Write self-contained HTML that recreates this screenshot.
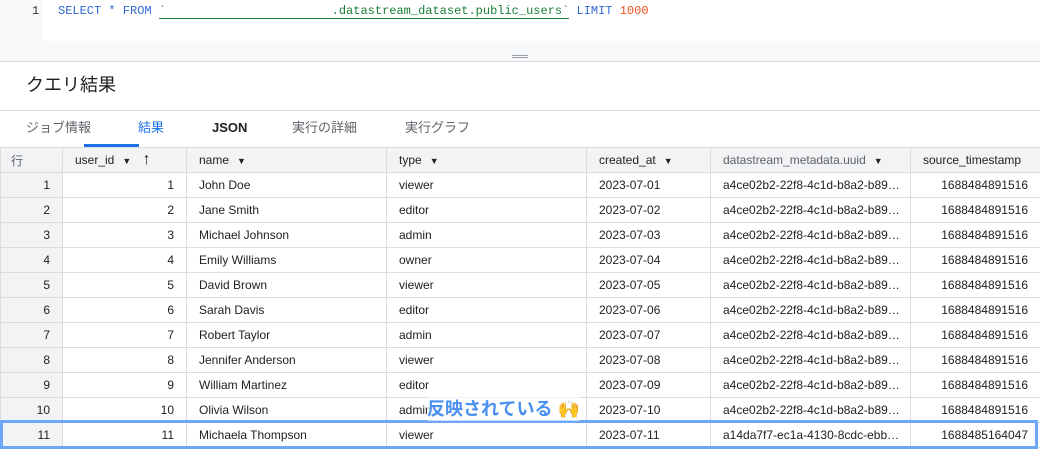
<!DOCTYPE html>
<html><head><meta charset="utf-8"><style>
*{margin:0;padding:0;box-sizing:border-box}
body{width:1040px;height:465px;overflow:hidden;background:#fff;font-family:"Liberation Sans","Noto Sans CJK JP",sans-serif;color:#202124;position:relative}
.ed{position:absolute;left:0;top:0;width:1040px;height:62px;background:#f8f9fa;border-bottom:1px solid #dadce0}
.code{position:absolute;left:43px;top:0;width:997px;height:41px;background:#fff}
.ln{position:absolute;left:32px;top:4px;font:12px "Liberation Mono",monospace;color:#333}
.sql{position:absolute;left:58px;top:4px;font:12px "Liberation Mono",monospace;color:#3367d6;white-space:pre}
.title{position:absolute;left:26px;top:73px;font-size:18px;line-height:24px}
.tabs{position:absolute;left:0;top:110px;width:1040px;height:37px;border-top:1px solid #dadce0;font-size:13px;color:#5f6368}
.tabs span{position:absolute;top:7px;line-height:20px}
table{position:absolute;left:0;top:147px;border-collapse:collapse;font-size:12px;table-layout:fixed;width:1040px}
td,th{border:1px solid #dadce0;height:25px;padding:0 12px;white-space:nowrap;overflow:hidden;font-weight:normal;text-align:left}
th{background:#f1f3f4;color:#202124;position:relative}
th .a{font-size:9px;margin-left:8px}
td.r{text-align:right}
td.n{background:#f1f3f4;text-align:right;padding:0 12px 0 0}
</style></head><body>
<div class="ed"><div class="code"></div><div class="ln">1</div>
<div class="sql">SELECT * FROM <span style="color:#188038;border-bottom:1px solid #188038">`                       .datastream_dataset.public_users`</span> LIMIT <span style="color:#f4511e">1000</span></div>
<div style="position:absolute;left:512px;top:55px;width:16px;height:3px;border-top:1px solid #9aa0a6;border-bottom:1px solid #9aa0a6"></div></div>
<div class="title">クエリ結果</div>
<div class="tabs"><span style="left:26px">ジョブ情報</span><span style="left:138px;color:#1a73e8">結果</span><span style="left:212px;color:#202124;font-weight:bold">JSON</span><span style="left:292px">実行の詳細</span><span style="left:405px">実行グラフ</span>
<div style="position:absolute;left:84px;top:33px;width:55px;height:3px;background:#1a73e8"></div></div>
<table>
<colgroup><col style="width:62px"><col style="width:124px"><col style="width:200px"><col style="width:200px"><col style="width:124px"><col style="width:200px"><col style="width:130px"></colgroup>
<tr><th style="color:#5f6368;padding-left:10px">行</th><th>user_id<span class="a">▼</span> <b style="font-size:16px;margin-left:8px">↑</b></th><th>name<span class="a">▼</span></th><th>type<span class="a">▼</span></th><th>created_at<span class="a">▼</span></th><th style="color:#5f6368">datastream_metadata.uuid<span class="a" style="color:#202124">▼</span></th><th>source_timestamp</th></tr>
<tr><td class="n">1</td><td class="r">1</td><td>John Doe</td><td>viewer</td><td>2023-07-01</td><td>a4ce02b2-22f8-4c1d-b8a2-b89…</td><td class="r">1688484891516</td></tr>
<tr><td class="n">2</td><td class="r">2</td><td>Jane Smith</td><td>editor</td><td>2023-07-02</td><td>a4ce02b2-22f8-4c1d-b8a2-b89…</td><td class="r">1688484891516</td></tr>
<tr><td class="n">3</td><td class="r">3</td><td>Michael Johnson</td><td>admin</td><td>2023-07-03</td><td>a4ce02b2-22f8-4c1d-b8a2-b89…</td><td class="r">1688484891516</td></tr>
<tr><td class="n">4</td><td class="r">4</td><td>Emily Williams</td><td>owner</td><td>2023-07-04</td><td>a4ce02b2-22f8-4c1d-b8a2-b89…</td><td class="r">1688484891516</td></tr>
<tr><td class="n">5</td><td class="r">5</td><td>David Brown</td><td>viewer</td><td>2023-07-05</td><td>a4ce02b2-22f8-4c1d-b8a2-b89…</td><td class="r">1688484891516</td></tr>
<tr><td class="n">6</td><td class="r">6</td><td>Sarah Davis</td><td>editor</td><td>2023-07-06</td><td>a4ce02b2-22f8-4c1d-b8a2-b89…</td><td class="r">1688484891516</td></tr>
<tr><td class="n">7</td><td class="r">7</td><td>Robert Taylor</td><td>admin</td><td>2023-07-07</td><td>a4ce02b2-22f8-4c1d-b8a2-b89…</td><td class="r">1688484891516</td></tr>
<tr><td class="n">8</td><td class="r">8</td><td>Jennifer Anderson</td><td>viewer</td><td>2023-07-08</td><td>a4ce02b2-22f8-4c1d-b8a2-b89…</td><td class="r">1688484891516</td></tr>
<tr><td class="n">9</td><td class="r">9</td><td>William Martinez</td><td>editor</td><td>2023-07-09</td><td>a4ce02b2-22f8-4c1d-b8a2-b89…</td><td class="r">1688484891516</td></tr>
<tr><td class="n">10</td><td class="r">10</td><td>Olivia Wilson</td><td>admin</td><td>2023-07-10</td><td>a4ce02b2-22f8-4c1d-b8a2-b89…</td><td class="r">1688484891516</td></tr>
<tr><td class="n">11</td><td class="r">11</td><td>Michaela Thompson</td><td>viewer</td><td>2023-07-11</td><td>a14da7f7-ec1a-4130-8cdc-ebb…</td><td class="r">1688485164047</td></tr>
</table>
<div style="position:absolute;left:0;top:420px;width:1038px;height:29px;border:3px solid #6ea6f8"></div>
<div style="position:absolute;left:427px;top:395px;font-size:18px;font-weight:bold;color:#4a90f0;background:rgba(255,255,255,0.6)">反映されている <span style="color:#f5b400">🙌</span></div>
</body></html>
